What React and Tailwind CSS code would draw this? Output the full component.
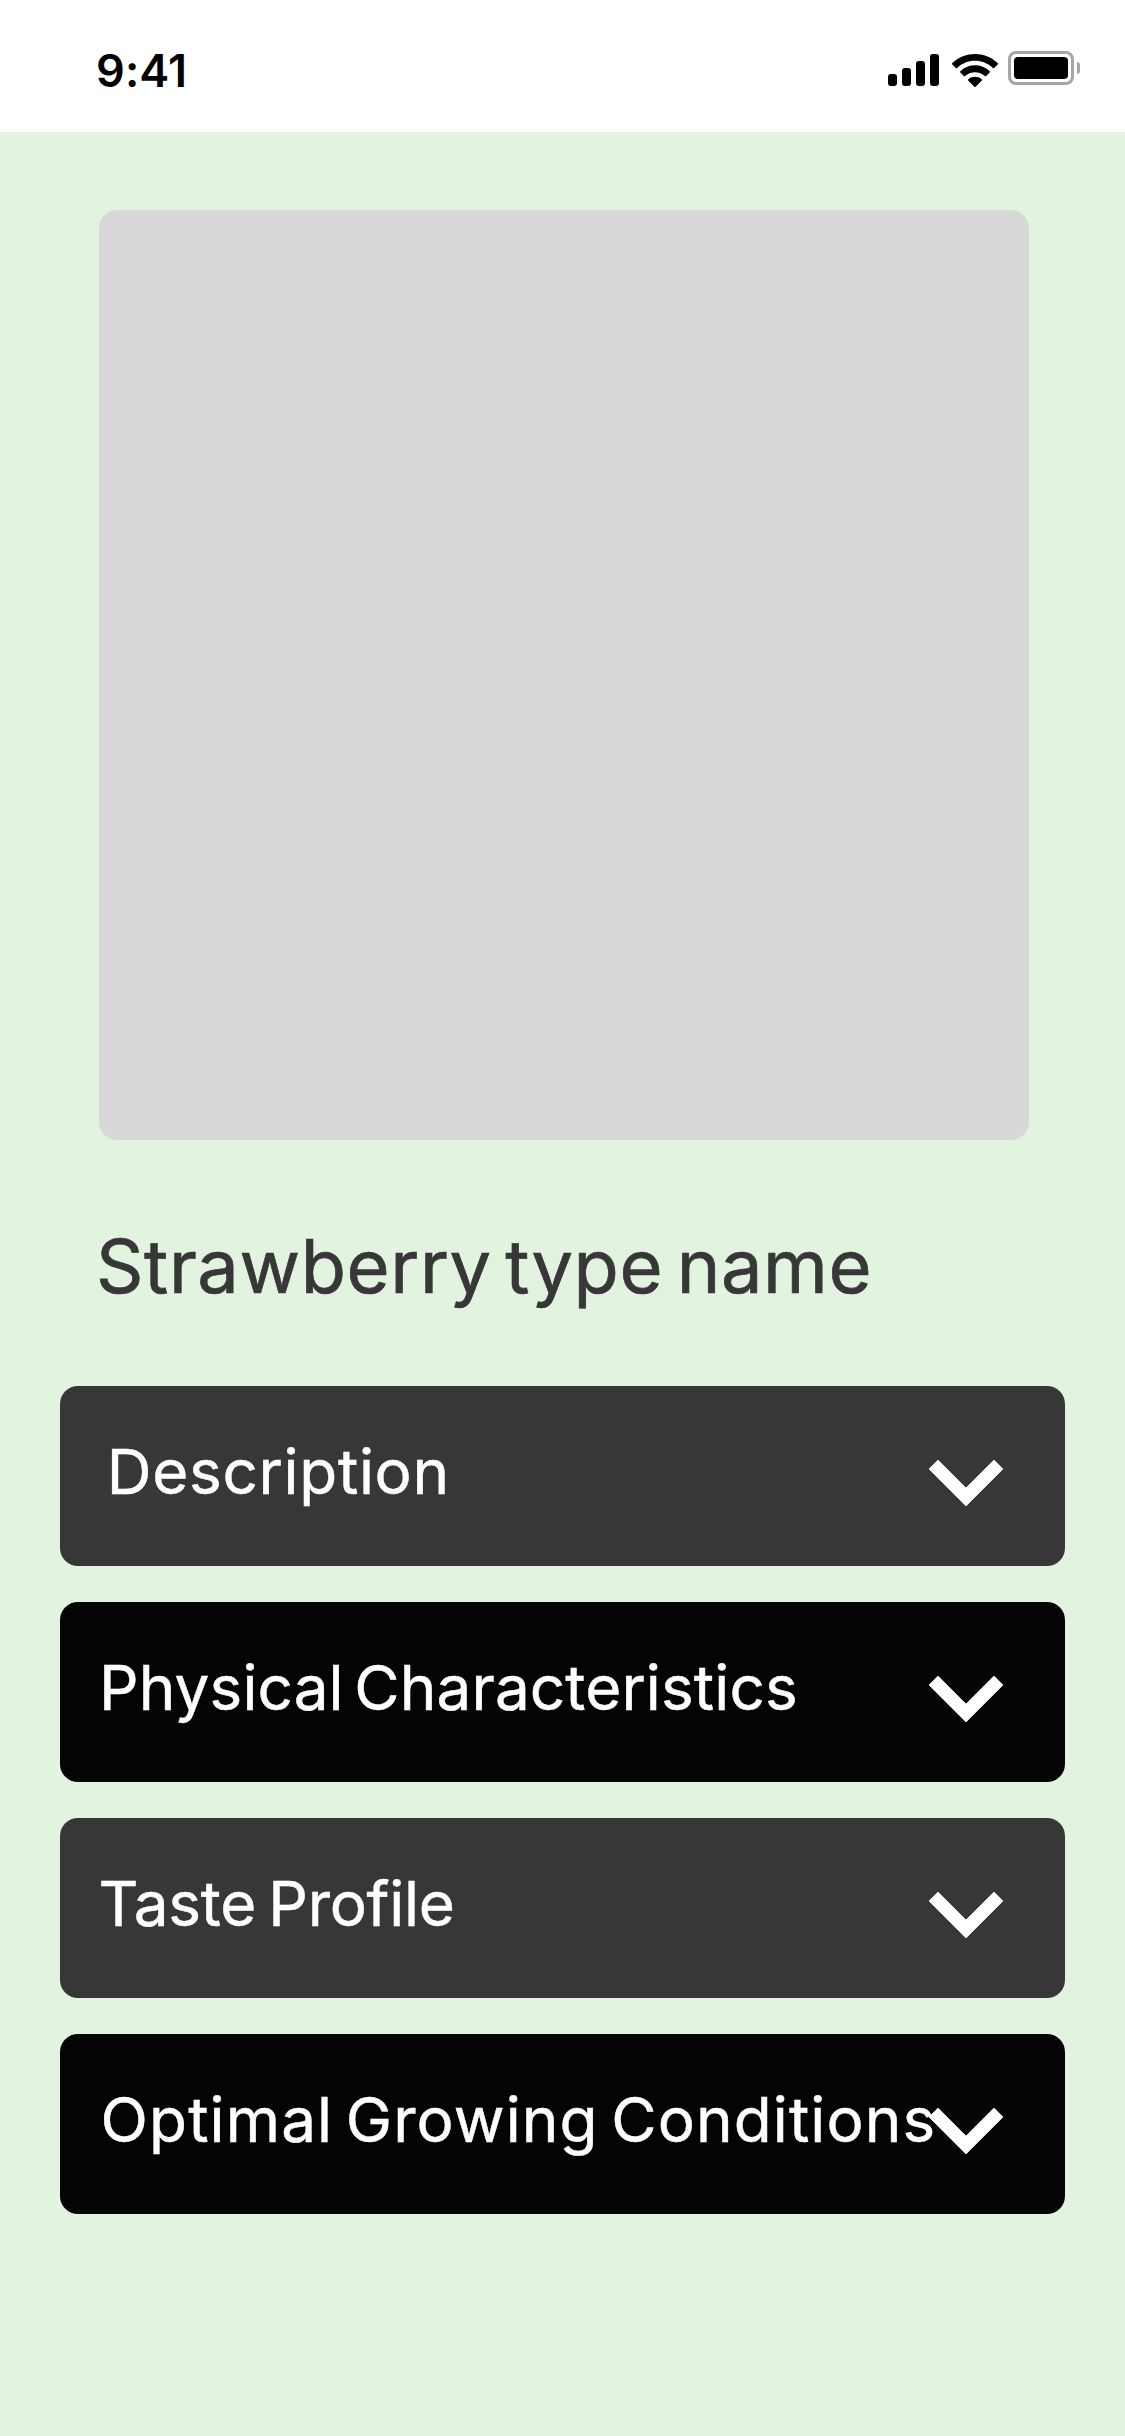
const SECTIONS = [
  { title: 'Description', row: 'bg-[#373737] pl-[46.7px]', text: 'tracking-[0.7px]' },
  { title: 'Physical Characteristics', row: 'bg-[#040404] pl-[39px]', text: 'tracking-[0.12px] [word-spacing:-7px]' },
  { title: 'Taste Profile', row: 'bg-[#373737] pl-[38.5px]', text: 'tracking-[-0.25px] [word-spacing:-5px]' },
  { title: 'Optimal Growing Conditions', row: 'bg-[#040404] pl-[40.6px]', text: 'tracking-[1.12px] [word-spacing:-6px]' },
];

function Signal() {
  return (
    <div className="flex h-8 items-end gap-[5px]">
      <span className="h-3 w-[9px] rounded-[3px] bg-black" />
      <span className="h-[18px] w-[9px] rounded-[3px] bg-black" />
      <span className="h-[25px] w-[9px] rounded-[3px] bg-black" />
      <span className="h-8 w-[9px] rounded-[3px] bg-black" />
    </div>
  );
}

function Wifi() {
  return (
    <svg viewBox="0 0 15.333 11.031" className="ml-[13px] h-[33px] w-[46px]" fill="black">
      <path d="M7.6667 2.2807C9.8914 2.2808 12.031 3.1389 13.6433 4.6775C13.7648 4.7963 13.9588 4.7948 14.0785 4.6742L15.2391 3.4994C15.2997 3.4382 15.3335 3.3554 15.333 3.2691C15.3325 3.1829 15.2977 3.1004 15.2363 3.0399C11.0051 -1.0133 4.3281 -1.0133 0.0969 3.0399C0.0355 3.1004 0.0006 3.1828 0 3.2691C-0.0005 3.3553 0.0333 3.4382 0.0938 3.4994L1.2547 4.6742C1.3744 4.795 1.5686 4.7965 1.69 4.6775C3.3025 3.1388 5.4423 2.2807 7.6667 2.2807Z" />
      <path d="M7.6644 6.1024C8.8867 6.1023 10.0654 6.5582 10.9715 7.3815C11.0941 7.4984 11.2873 7.4959 11.4068 7.3758L12.5659 6.201C12.6269 6.1394 12.6608 6.0558 12.6599 5.969C12.6591 5.8821 12.6236 5.7992 12.5615 5.7387C9.8021 3.1502 5.5292 3.1502 2.7698 5.7387C2.7076 5.7992 2.6721 5.8822 2.6713 5.969C2.6705 6.0559 2.7044 6.1395 2.7655 6.201L3.9243 7.3758C4.0438 7.4959 4.237 7.4984 4.3596 7.3815C5.2651 6.5588 6.4429 6.1029 7.6644 6.1024Z" />
      <path d="M9.987 8.6728C9.9887 8.7599 9.9547 8.8439 9.893 8.9049L7.8881 10.9377C7.8293 10.9975 7.7492 11.0311 7.6656 11.0311C7.582 11.0311 7.5019 10.9975 7.4432 10.9377L5.4379 8.9049C5.3763 8.8439 5.3423 8.7598 5.3442 8.6727C5.346 8.5856 5.3834 8.503 5.4476 8.4446C6.728 7.3613 8.6031 7.3613 9.8835 8.4446C9.9477 8.5031 9.9851 8.5857 9.987 8.6728Z" />
    </svg>
  );
}

function Battery() {
  return (
    <div className="mb-px ml-2.5 flex items-center gap-[3px]">
      <div className="h-[34px] w-[66px] rounded-[8px] border-[3px] border-[#a6a6a6] p-[3px]">
        <div className="h-full rounded-[4px] bg-black" />
      </div>
      <span className="h-3 w-[3px] rounded-r-full bg-[#a6a6a6]" />
    </div>
  );
}

function StatusBar() {
  return (
    <header className="flex h-[132px] justify-between bg-white pr-[45px] pl-24">
      <div className="flex items-center pt-[9px] text-[45px] leading-none font-semibold tracking-[0.1px] text-black">
        9:41
      </div>
      <div className="flex h-[87px] items-end">
        <div className="mb-px"><Signal /></div>
        <Wifi />
        <div className="mb-px"><Battery /></div>
      </div>
    </header>
  );
}

function Chevron() {
  return (
    <svg
      viewBox="0 0 74 46"
      className="mt-[22px] h-[46px] w-[74px] shrink-0 overflow-visible"
      fill="white"
      stroke="white"
      strokeWidth="0.7"
    >
      <path d="M9 0L37 28L65 0L74 9L37 46L0 9Z" />
    </svg>
  );
}

export default function App() {
  return (
    <div className="h-[2436px] w-[1125px] overflow-hidden bg-[#e2f4e0] font-['Inter',sans-serif]">
      <StatusBar />
      <main className="pt-[78px]">
        <div className="ml-[99px] size-[930px] rounded-[18px] bg-[#d8d8d8]" />
        <h1 className="flex h-[246px] items-center pt-1.5 pl-24 text-[74px] leading-none tracking-[0.6px] text-[#373737] [-webkit-text-stroke:0.7px_#373737] [word-spacing:-8px]">
          Strawberry type name
        </h1>
        <div className="flex flex-col gap-9 px-[60px]">
          {SECTIONS.map(({ title, row, text }) => (
            <button
              key={title}
              className={`flex h-[180px] items-center justify-between rounded-[18px] pr-[62px] pb-[9px] text-left text-white ${row}`}
            >
              <span
                className={`w-0 text-[62px] leading-none whitespace-nowrap [-webkit-text-stroke:0.5px_white] ${text}`}
              >
                {title}
              </span>
              <Chevron />
            </button>
          ))}
        </div>
      </main>
    </div>
  );
}
